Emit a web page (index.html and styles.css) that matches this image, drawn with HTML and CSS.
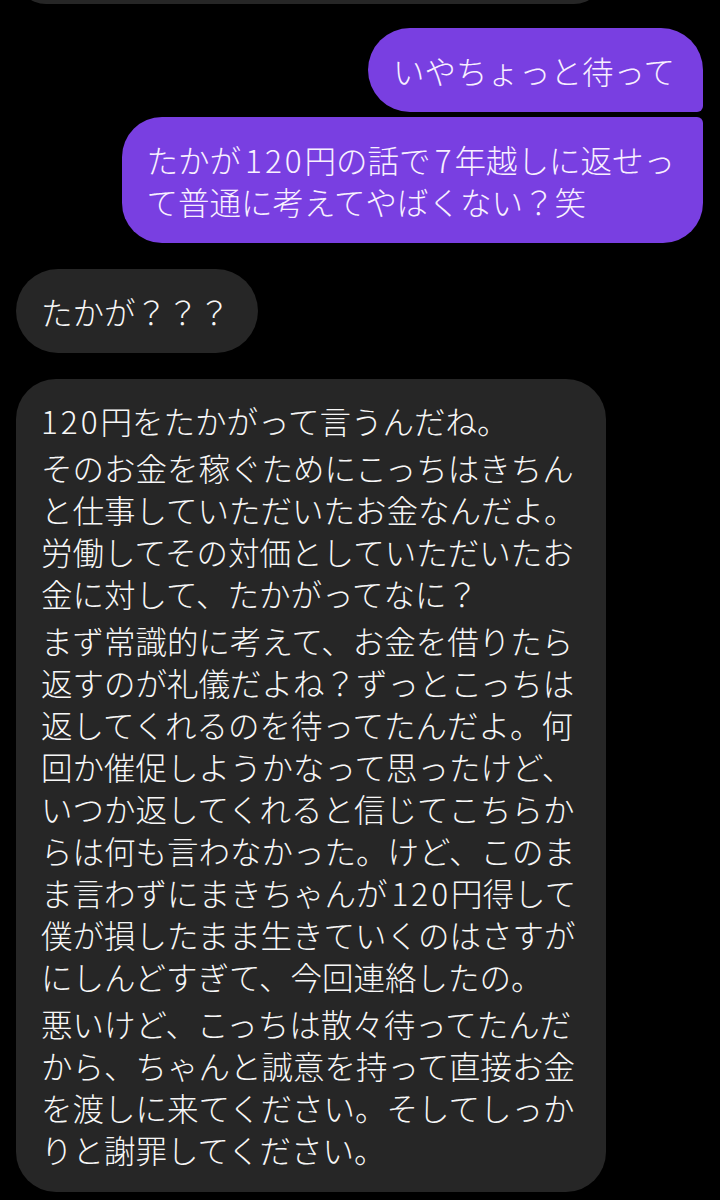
FILE: index.html
```html
<!DOCTYPE html>
<html lang="ja">
<head>
<meta charset="utf-8">
<title>Chat</title>
<link rel="stylesheet" href="styles.css">
</head>
<body>
<div class="thread">
  <div class="bubble in stub"></div>

  <div class="group out-group">
    <div class="bubble out first">いやちょっと待って</div>
    <div class="bubble out last">たかが<span class="num">120</span>円の話で<span class="num">7</span>年越しに返せっ<br>て普通に考えてやばくない？笑</div>
  </div>

  <div class="bubble in single">たかが？？？</div>

  <div class="bubble in long">
    <p><span class="num lead">120</span>円をたかがって言うんだね。</p>
    <p>そのお金を稼ぐためにこっちはきちん<br>と仕事していただいたお金なんだよ。<br>労働してその対価としていただいたお<br>金に対して、たかがってなに？</p>
    <p>まず常識的に考えて、お金を借りたら<br>返すのが礼儀だよね？ずっとこっちは<br>返してくれるのを待ってたんだよ。何<br>回か催促しようかなって思ったけど、<br>いつか返してくれると信じてこちらか<br>らは何も言わなかった。けど、このま<br>ま言わずにまきちゃんが<span class="num">120</span>円得して<br>僕が損したまま生きていくのはさすが<br>にしんどすぎて、今回連絡したの。</p>
    <p>悪いけど、こっちは散々待ってたんだ<br>から、ちゃんと誠意を持って直接お金<br>を渡しに来てください。そしてしっか<br>りと謝罪してください。</p>
  </div>
</div>
</body>
</html>
```

FILE: styles.css
```css
html, body {
  margin: 0;
  padding: 0;
  background: #000;
}

body {
  width: 720px;
  height: 1200px;
  overflow: hidden;
  font-family: "Noto Sans CJK JP", "Noto Sans", sans-serif;
  font-size: 31.5px;
  font-weight: 300;
  line-height: 42px;
  color: #f7f7f7;
}

.thread {
  display: flex;
  flex-direction: column;
  padding: 0 17px 0 16px;
}

.bubble {
  box-sizing: border-box;
  padding: 21px 28px 21px 25px;
  white-space: nowrap;
  border-radius: 42px;
}

.bubble.in {
  align-self: flex-start;
  background: #262626;
}

.stub {
  width: 588px;
  height: 60px;
  margin-top: -56px;
  border-radius: 40px;
}

.group {
  display: flex;
  flex-direction: column;
  align-items: flex-end;
  gap: 5px;
  margin-top: 24px;
}

.bubble.out {
  background: #793fe1;
  color: #f8f0ff;
}

.bubble.out.first {
  border-radius: 42px 42px 6px 42px;
}

.bubble.out.last {
  border-radius: 40px 6px 40px 40px;
}

.single {
  margin-top: 26px;
}

.long {
  margin-top: 26px;
  width: 590px;
  border-radius: 40px;
  padding-top: 20px;
  padding-bottom: 22px;
  display: flex;
  flex-direction: column;
  gap: 5px;
}

.long p {
  margin: 0;
}

.num {
  letter-spacing: 3px;
  padding-left: 4px;
}

.num.lead {
  padding-left: 0;
}
```
